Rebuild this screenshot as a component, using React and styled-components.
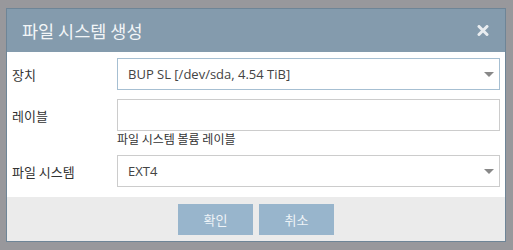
import React from "react";
import styled, { createGlobalStyle } from "styled-components";

const Global = createGlobalStyle`
  html, body { margin: 0; padding: 0; background: #98989c; }
  body { font-family: "Open Sans", "Noto Sans CJK KR", sans-serif; }
  * { box-sizing: border-box; }
`;

const Overlay = styled.div`
  width: 513px;
  height: 250px;
  padding: 8px 0 0 6px;
`;

const Dialog = styled.div`
  width: 500px;
  border: 1px solid #6e8597;
  background: #fff;
  display: flex;
  flex-direction: column;
`;

const Header = styled.div`
  height: 43px;
  background: #849bad;
  display: flex;
  align-items: center;
  justify-content: space-between;
  padding: 0 16px 0 15px;
`;

const Title = styled.div`
  font-family: "Noto Sans CJK KR", sans-serif;
  font-size: 17.5px;
  color: #f2f5f7;
  line-height: 1;
`;

const Close = styled.svg`
  width: 12px;
  height: 11px;
  display: block;
`;

const Body = styled.div`
  padding: 6px 5px 10px 5px;
  display: flex;
  flex-direction: column;
  gap: 9px;
`;

const Row = styled.div`
  display: grid;
  grid-template-columns: 105px 1fr;
  align-items: start;
`;

const Label = styled.div`
  height: 32px;
  display: flex;
  align-items: center;
  font-family: "Noto Sans CJK KR", sans-serif;
  font-size: 13px;
  color: #333;
`;

const Field = styled.div`
  display: flex;
  flex-direction: column;
`;

const Box = styled.div`
  height: 32px;
  border: 1px solid ${(p) => (p.$focus ? "#a6bfd2" : "#cccccc")};
  background: #fff;
  display: flex;
  align-items: center;
  justify-content: space-between;
  padding: 0 5px 0 10px;
  font-size: 13px;
  color: #444;
`;

const Arrow = styled.span`
  width: 0;
  height: 0;
  border-left: 5.5px solid transparent;
  border-right: 5.5px solid transparent;
  border-top: 5px solid #888;
`;

const Help = styled.div`
  font-family: "Noto Sans CJK KR", sans-serif;
  font-size: 12px;
  color: #333;
  line-height: 15px;
  height: 15px;
`;

const Footer = styled.div`
  height: 44px;
  background: #ebebeb;
  display: flex;
  justify-content: center;
  align-items: center;
  gap: 6px;
`;

const Button = styled.button`
  width: 75px;
  height: 31px;
  border: none;
  background: #98b5cc;
  color: #eef3f7;
  font-family: "Noto Sans CJK KR", sans-serif;
  font-size: 13px;
  padding: 0;
`;

export default function App() {
  return (
    <Overlay>
      <Global />
      <Dialog>
        <Header>
          <Title>파일 시스템 생성</Title>
          <Close viewBox="0 0 12 11">
            <path d="M2 1.5 L10 9.5 M10 1.5 L2 9.5" stroke="#e9edf0" strokeWidth="3" strokeLinecap="round" />
          </Close>
        </Header>
        <Body>
          <Row>
            <Label>장치</Label>
            <Field>
              <Box $focus>
                <span>BUP SL [/dev/sda, 4.54 TiB]</span>
                <Arrow />
              </Box>
            </Field>
          </Row>
          <Row>
            <Label>레이블</Label>
            <Field>
              <Box />
              <Help>파일 시스템 볼륨 레이블</Help>
            </Field>
          </Row>
          <Row>
            <Label>파일 시스템</Label>
            <Field>
              <Box>
                <span>EXT4</span>
                <Arrow />
              </Box>
            </Field>
          </Row>
        </Body>
        <Footer>
          <Button>확인</Button>
          <Button>취소</Button>
        </Footer>
      </Dialog>
    </Overlay>
  );
}
